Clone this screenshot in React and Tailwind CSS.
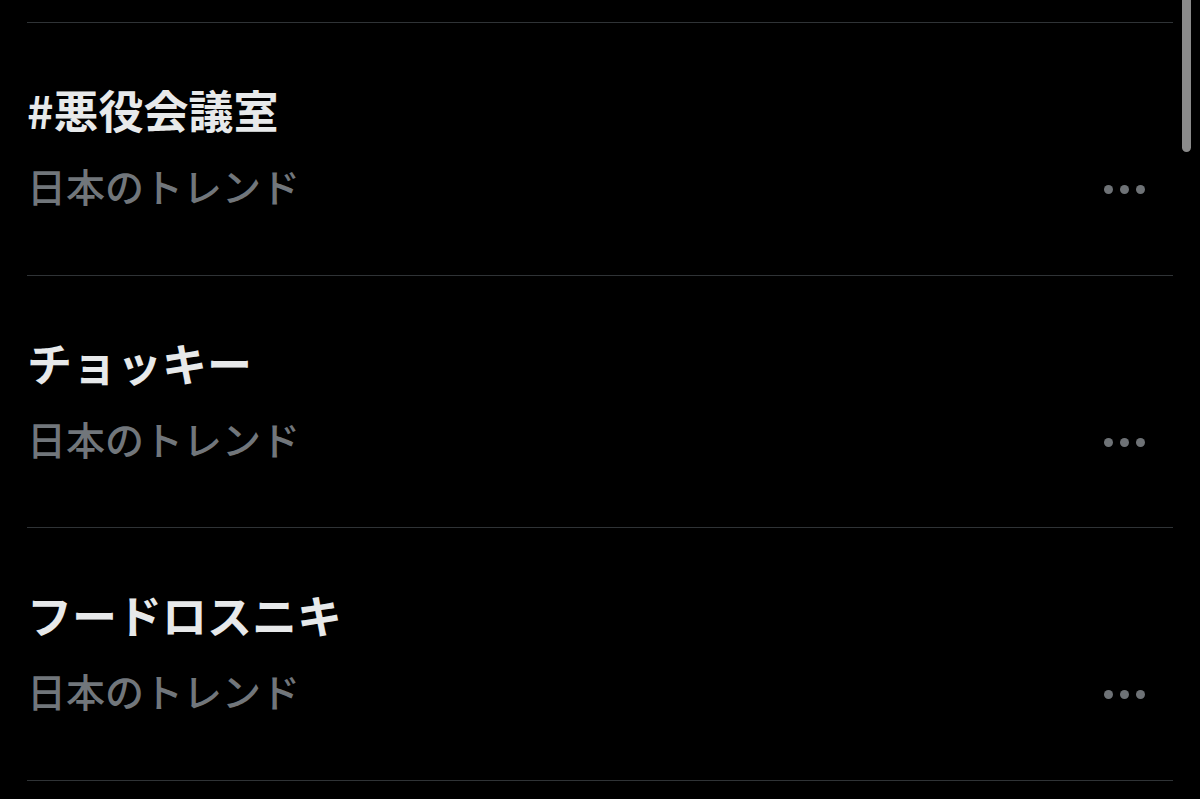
const trends = [
  { name: '#悪役会議室', place: '日本のトレンド' },
  { name: 'チョッキー', place: '日本のトレンド' },
  { name: 'フードロスニキ', place: '日本のトレンド' },
];

const MoreDots = () => (
  <div className="flex items-center gap-[7px] mt-[9px]">
    <span className="w-[9px] h-[9px] rounded-full bg-[#6e7276]" />
    <span className="w-[9px] h-[9px] rounded-full bg-[#6e7276]" />
    <span className="w-[9px] h-[9px] rounded-full bg-[#6e7276]" />
  </div>
);

export default function App() {
  return (
    <div
      className="relative w-[1200px] h-[799px] overflow-hidden bg-black"
      style={{ fontFamily: '"Noto Sans CJK JP", "Noto Sans", sans-serif' }}
    >
      <div className="pt-[22px] pl-[27px] w-[1173px]">
        <div className="border-t border-[#2f3336]">
          {trends.map((t) => (
            <div
              key={t.name}
              className="h-[252.5px] border-b border-[#2f3336] pt-[61px] pr-[28px]"
            >
              <div className="text-[45px] leading-[52px] font-semibold text-[#e7e9ea]">
                {t.name}
              </div>
              <div className="flex items-center justify-between mt-[25px]">
                <span className="text-[39px] leading-[48px] font-medium text-[#71767b]">
                  {t.place}
                </span>
                <MoreDots />
              </div>
            </div>
          ))}
        </div>
      </div>
      <div className="absolute left-[1182px] top-0 w-[9px] h-[152px] rounded-b-full bg-[#8a8a8a]" />
    </div>
  );
}
